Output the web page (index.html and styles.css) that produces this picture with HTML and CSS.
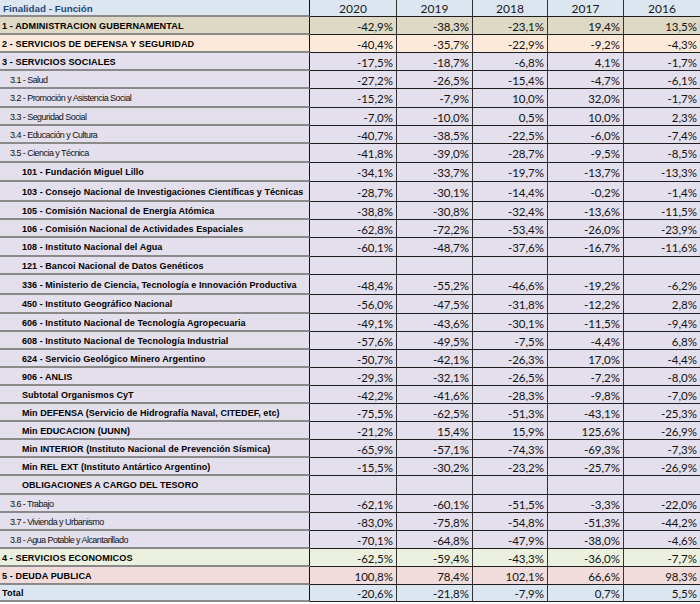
FILE: index.html
```html
<!DOCTYPE html>
<html lang="es">
<head>
<meta charset="utf-8">
<title>Finalidad - Función</title>
<link rel="stylesheet" href="styles.css">
</head>
<body>
<div class="sheet">
  <div class="r hd h17"><div class="lab head">Finalidad - Función</div><div class="n yr">2020</div><div class="n yr">2019</div><div class="n yr">2018</div><div class="n yr">2017</div><div class="n yr">2016</div></div>
  <div class="r tan"><div class="lab cat">1 - ADMINISTRACION GUBERNAMENTAL</div><div class="n">-42,9%</div><div class="n">-38,3%</div><div class="n">-23,1%</div><div class="n">19,4%</div><div class="n">13,5%</div></div>
  <div class="r peach"><div class="lab cat">2 - SERVICIOS DE DEFENSA Y SEGURIDAD</div><div class="n">-40,4%</div><div class="n">-35,7%</div><div class="n">-22,9%</div><div class="n">-9,2%</div><div class="n">-4,3%</div></div>
  <div class="r lav"><div class="lab cat">3 - SERVICIOS SOCIALES</div><div class="n">-17,5%</div><div class="n">-18,7%</div><div class="n">-6,8%</div><div class="n">4,1%</div><div class="n">-1,7%</div></div>
  <div class="r lav"><div class="lab sub">3.1 - Salud</div><div class="n">-27,2%</div><div class="n">-26,5%</div><div class="n">-15,4%</div><div class="n">-4,7%</div><div class="n">-6,1%</div></div>
  <div class="r lav h19"><div class="lab sub">3.2 - Promoción y Asistencia Social</div><div class="n">-15,2%</div><div class="n">-7,9%</div><div class="n">10,0%</div><div class="n">32,0%</div><div class="n">-1,7%</div></div>
  <div class="r lav"><div class="lab sub">3.3 - Seguridad Social</div><div class="n">-7,0%</div><div class="n">-10,0%</div><div class="n">0,5%</div><div class="n">10,0%</div><div class="n">2,3%</div></div>
  <div class="r lav"><div class="lab sub">3.4 - Educación y Cultura</div><div class="n">-40,7%</div><div class="n">-38,5%</div><div class="n">-22,5%</div><div class="n">-6,0%</div><div class="n">-7,4%</div></div>
  <div class="r lav h19"><div class="lab sub">3.5 - Ciencia y Técnica</div><div class="n">-41,8%</div><div class="n">-39,0%</div><div class="n">-28,7%</div><div class="n">-9,5%</div><div class="n">-8,5%</div></div>
  <div class="r lav h19"><div class="lab ent">101 - Fundación Miguel Lillo</div><div class="n">-34,1%</div><div class="n">-33,7%</div><div class="n">-19,7%</div><div class="n">-13,7%</div><div class="n">-13,3%</div></div>
  <div class="r lav h20"><div class="lab ent">103 - Consejo Nacional de Investigaciones Científicas y Técnicas</div><div class="n">-28,7%</div><div class="n">-30,1%</div><div class="n">-14,4%</div><div class="n">-0,2%</div><div class="n">-1,4%</div></div>
  <div class="r lav"><div class="lab ent">105 - Comisión Nacional de Energía Atómica</div><div class="n">-38,8%</div><div class="n">-30,8%</div><div class="n">-32,4%</div><div class="n">-13,6%</div><div class="n">-11,5%</div></div>
  <div class="r lav"><div class="lab ent">106 - Comisión Nacional de Actividades Espaciales</div><div class="n">-62,8%</div><div class="n">-72,2%</div><div class="n">-53,4%</div><div class="n">-26,0%</div><div class="n">-23,9%</div></div>
  <div class="r lav h19"><div class="lab ent">108 - Instituto Nacional del Agua</div><div class="n">-60,1%</div><div class="n">-48,7%</div><div class="n">-37,6%</div><div class="n">-16,7%</div><div class="n">-11,6%</div></div>
  <div class="r lav"><div class="lab ent">121 - Bancoi Nacional de Datos Genéticos</div><div class="n"></div><div class="n"></div><div class="n"></div><div class="n"></div><div class="n"></div></div>
  <div class="r lav h20"><div class="lab ent">336 - Ministerio de Ciencia, Tecnología e Innovación Productiva</div><div class="n">-48,4%</div><div class="n">-55,2%</div><div class="n">-46,6%</div><div class="n">-19,2%</div><div class="n">-6,2%</div></div>
  <div class="r lav h19"><div class="lab ent">450 - Instituto Geográfico Nacional</div><div class="n">-56,0%</div><div class="n">-47,5%</div><div class="n">-31,8%</div><div class="n">-12,2%</div><div class="n">2,8%</div></div>
  <div class="r lav"><div class="lab ent">606 - Instituto Nacional de Tecnología Agropecuaria</div><div class="n">-49,1%</div><div class="n">-43,6%</div><div class="n">-30,1%</div><div class="n">-11,5%</div><div class="n">-9,4%</div></div>
  <div class="r lav"><div class="lab ent">608 - Instituto Nacional de Tecnología Industrial</div><div class="n">-57,6%</div><div class="n">-49,5%</div><div class="n">-7,5%</div><div class="n">-4,4%</div><div class="n">6,8%</div></div>
  <div class="r lav"><div class="lab ent">624 - Servicio Geológico Minero Argentino</div><div class="n">-50,7%</div><div class="n">-42,1%</div><div class="n">-26,3%</div><div class="n">17,0%</div><div class="n">-4,4%</div></div>
  <div class="r lav"><div class="lab ent">906 - ANLIS</div><div class="n">-29,3%</div><div class="n">-32,1%</div><div class="n">-26,5%</div><div class="n">-7,2%</div><div class="n">-8,0%</div></div>
  <div class="r lav"><div class="lab ent">Subtotal Organismos CyT</div><div class="n">-42,2%</div><div class="n">-41,6%</div><div class="n">-28,3%</div><div class="n">-9,8%</div><div class="n">-7,0%</div></div>
  <div class="r lav"><div class="lab ent">Min DEFENSA (Servicio de Hidrografía Naval, CITEDEF, etc)</div><div class="n">-75,5%</div><div class="n">-62,5%</div><div class="n">-51,3%</div><div class="n">-43,1%</div><div class="n">-25,3%</div></div>
  <div class="r lav"><div class="lab ent">Min EDUCACION (UUNN)</div><div class="n">-21,2%</div><div class="n">15,4%</div><div class="n">15,9%</div><div class="n">125,6%</div><div class="n">-26,9%</div></div>
  <div class="r lav"><div class="lab ent">Min INTERIOR (Instituto Nacional de Prevención Sísmica)</div><div class="n">-65,9%</div><div class="n">-57,1%</div><div class="n">-74,3%</div><div class="n">-69,3%</div><div class="n">-7,3%</div></div>
  <div class="r lav"><div class="lab ent">Min REL EXT (Instituto Antártico Argentino)</div><div class="n">-15,5%</div><div class="n">-30,2%</div><div class="n">-23,2%</div><div class="n">-25,7%</div><div class="n">-26,9%</div></div>
  <div class="r lav h19"><div class="lab ent">OBLIGACIONES A CARGO DEL TESORO</div><div class="n"></div><div class="n"></div><div class="n"></div><div class="n"></div><div class="n"></div></div>
  <div class="r lav"><div class="lab sub">3.6 - Trabajo</div><div class="n">-62,1%</div><div class="n">-60,1%</div><div class="n">-51,5%</div><div class="n">-3,3%</div><div class="n">-22,0%</div></div>
  <div class="r lav"><div class="lab sub">3.7 - Vivienda y Urbanismo</div><div class="n">-83,0%</div><div class="n">-75,8%</div><div class="n">-54,8%</div><div class="n">-51,3%</div><div class="n">-44,2%</div></div>
  <div class="r lav"><div class="lab sub">3.8 - Agua Potable y Alcantarillado</div><div class="n">-70,1%</div><div class="n">-64,8%</div><div class="n">-47,9%</div><div class="n">-38,0%</div><div class="n">-4,6%</div></div>
  <div class="r green"><div class="lab cat">4 - SERVICIOS ECONOMICOS</div><div class="n">-62,5%</div><div class="n">-59,4%</div><div class="n">-43,3%</div><div class="n">-36,0%</div><div class="n">-7,7%</div></div>
  <div class="r pink"><div class="lab cat">5 - DEUDA PUBLICA</div><div class="n">100,8%</div><div class="n">78,4%</div><div class="n">102,1%</div><div class="n">66,6%</div><div class="n">98,3%</div></div>
  <div class="r blue h17"><div class="lab cat">Total</div><div class="n">-20,6%</div><div class="n">-21,8%</div><div class="n">-7,9%</div><div class="n">0,7%</div><div class="n">5,5%</div></div>
</div>
</body>
</html>
```
FILE: styles.css
```css
html, body {
  margin: 0;
  padding: 0;
  background: #ffffff;
}
.sheet {
  width: 700px;
  display: flex;
  flex-direction: column;
}
.r {
  display: grid;
  grid-template-columns: 310px 87px 76px 75px 76px 76px;
  height: 18px;
  box-sizing: border-box;
}
.r.h17 { height: 17px; }
.r.h19 { height: 19px; }
.r.h20 { height: 20px; }

.hd { background: #dce6f1; }
.tan { background: #ddd9c4; }
.peach { background: #fde9d9; }
.lav { background: #e4dfec; }
.green { background: #ebf1de; }
.pink { background: #f2dcdb; }
.blue { background: #dce6f1; }

.lab {
  box-sizing: border-box;
  border-right: 1px solid #111111;
  border-bottom: 2px solid #8a8a8a;
  display: flex;
  align-items: center;
  white-space: nowrap;
  overflow: hidden;
  color: #000000;
  font-family: "Liberation Sans", Arial, sans-serif;
  padding-top: 1px;
}
.head {
  padding-left: 3px;
  font-weight: bold;
  font-size: 9.8px;
  color: #1f4a7c;
}
.cat {
  padding-left: 2px;
  font-weight: bold;
  font-size: 9.1px;
  letter-spacing: 0.1px;
}
.sub {
  padding-left: 10px;
  font-size: 9px;
  letter-spacing: -0.55px;
  color: #111111;
}
.ent {
  padding-left: 22px;
  font-weight: bold;
  font-size: 9px;
  letter-spacing: 0.05px;
}
.n {
  box-sizing: border-box;
  border-right: 1px solid #333333;
  border-bottom: 1px solid #1e1e1e;
  display: flex;
  align-items: center;
  justify-content: flex-end;
  padding-right: 3px;
  padding-top: 1px;
  font-family: Lato, "Liberation Sans", sans-serif;
  font-size: 11.5px;
  color: #111111;
}
.n.yr {
  justify-content: center;
  padding-right: 0;
  font-size: 12px;
  color: #1a1a1a;
}
.r .n:last-child {
  border-right: none;
}
```
